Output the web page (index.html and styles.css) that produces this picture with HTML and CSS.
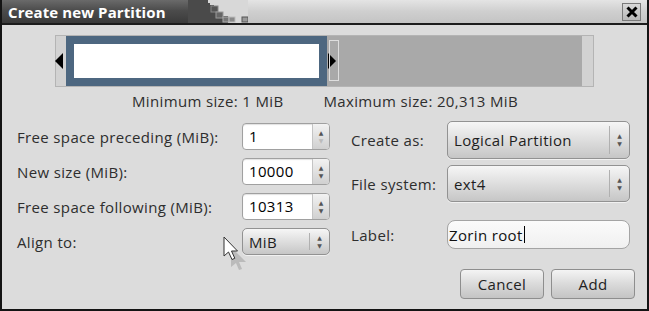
FILE: index.html
```html
<!DOCTYPE html>
<html>
<head>
<meta charset="utf-8">
<link rel="stylesheet" href="styles.css">
</head>
<body>
<div class="window">
  <div class="titlebar">
    <div class="title-dark"><span class="title-text">Create new Partition</span></div>
    <svg class="stairs" width="60" height="23" viewBox="0 0 60 23">
      <rect x="0" y="0" width="60" height="23" fill="#d8d8d8"/>
      <polygon points="0,0 20,0 20,3 22,3 22,5 26,5 26,8 30,8 30,12 35,12 35,16 40,16 40,23 0,23" fill="#4a4a4a"/>
      <rect x="23" y="6" width="7" height="6" fill="#555" stroke="#888" stroke-width="1"/>
      <rect x="28" y="12" width="7" height="6" fill="#666" stroke="#999" stroke-width="1"/>
      <rect x="35" y="17" width="6" height="5" fill="#777" stroke="#aaa" stroke-width="1"/>
      <rect x="41" y="17" width="6" height="5" fill="#888" stroke="#bbb" stroke-width="1"/>
      <rect x="54" y="17" width="6" height="5" fill="#999" stroke="#555" stroke-width="1"/>
    </svg>
    <div class="title-light">
      <div class="close-btn">
        <svg width="12" height="12" viewBox="0 0 12 12"><path d="M1.5 1.5 L10.5 10.5 M10.5 1.5 L1.5 10.5" stroke="#000" stroke-width="3"/></svg>
      </div>
    </div>
  </div>
  <div class="content">
    <div class="partbar">
      <div class="strip-light"></div>
      <div class="part-sel"><div class="part-inner"></div></div>
      <div class="part-free"></div>
      <div class="strip-light right"></div>
      <div class="arrow-left"></div>
      <div class="arrow-right"></div>
      <div class="free-handle"></div>
    </div>
    <div class="sizes">
      <span>Minimum size: 1 MiB</span>
      <span>Maximum size: 20,313 MiB</span>
    </div>
    <div class="form">
      <div class="col-left">
        <div class="row"><span class="lbl">Free space preceding (MiB):</span>
          <div class="spin"><span class="spin-val">1</span><div class="spin-btn"><span class="up">▲</span><span class="down dim">▼</span></div></div></div>
        <div class="row"><span class="lbl">New size (MiB):</span>
          <div class="spin"><span class="spin-val">10000</span><div class="spin-btn"><span class="up">▲</span><span class="down">▼</span></div></div></div>
        <div class="row"><span class="lbl">Free space following (MiB):</span>
          <div class="spin"><span class="spin-val">10313</span><div class="spin-btn"><span class="up">▲</span><span class="down">▼</span></div></div></div>
        <div class="row"><span class="lbl">Align to:</span>
          <div class="combo small"><span class="combo-val">MiB</span><div class="combo-arr"><span>▲</span><span>▼</span></div></div></div>
      </div>
      <div class="col-right">
        <div class="rrow tall"><span class="rlbl">Create as:</span>
          <div class="combo big"><span class="combo-val">Logical Partition</span><div class="combo-arr"><span>▲</span><span>▼</span></div></div></div>
        <div class="rrow tall2"><span class="rlbl">File system:</span>
          <div class="combo big"><span class="combo-val">ext4</span><div class="combo-arr"><span>▲</span><span>▼</span></div></div></div>
        <div class="rrow entryrow"><span class="rlbl">Label:</span>
          <div class="entry"><span>Zorin root</span><span class="caret"></span></div></div>
        <div class="buttons">
          <div class="btn">Cancel</div>
          <div class="btn">Add</div>
        </div>
      </div>
    </div>
  </div>
  <svg class="pointer" width="28" height="34" viewBox="0 0 28 34">
    <path d="M6 8 L21 23 L14 23 L17 30 L14 31 L11 24 L6 28 Z" fill="#999" opacity="0.5" transform="translate(3,3)"/>
    <path d="M2 1 L2 20 L6.5 16 L10 23.5 L12.8 22.3 L9.5 15 L15.5 15 Z" fill="#fff" stroke="#333" stroke-width="1" stroke-linejoin="round"/>
  </svg>
</div>
</body>
</html>
```
FILE: styles.css
```css
* { box-sizing: border-box; }
html, body { margin: 0; padding: 0; }
body { width: 649px; height: 311px; overflow: hidden; font-family: "Open Sans", "DejaVu Sans", sans-serif; font-size: 15px; letter-spacing: 0.35px; color: #2e2e2e; }

.window {
  position: relative;
  width: 649px; height: 311px;
  background: #dcdcdc;
  border: 2px solid #141414;
  border-top: 0;
  display: flex; flex-direction: column;
}

.titlebar {
  height: 25px;
  display: flex;
  border-bottom: 2px solid #1c1c1c;
  flex: none;
}
.title-dark {
  width: 186px;
  background: linear-gradient(#6a6a6a, #4c4c4c 45%, #3a3a3a);
  display: flex; align-items: center;
  padding-left: 6px;
}
.title-text { color: #fff; font-weight: bold; font-size: 15px; letter-spacing: 0.1px; }
.stairs { flex: none; display: block; }
.title-light {
  flex: 1;
  background: linear-gradient(#e4e4e4, #cfcfcf 50%, #c4c4c4);
  display: flex; justify-content: flex-end; align-items: center;
  padding-right: 6px;
}
.close-btn {
  width: 19px; height: 18px;
  background: linear-gradient(#d8d8d8, #b8b8b8);
  border: 1px solid #7a7a7a;
  display: flex; align-items: center; justify-content: center;
  margin-top: 1px;
}

.content { flex: 1; display: flex; flex-direction: column; }

.partbar {
  position: relative;
  margin: 10px 0 0 53px;
  width: 539px; height: 52px;
  border: 1px solid #b4b4b4;
  display: flex;
}
.strip-light { width: 10px; background: #d2d2d2; }
.strip-light.right { width: 11px; }
.part-sel { width: 261px; border: 8px solid #4d6780; background: #fff; }
.part-free { flex: 1; background: #a9a9a9; }
.arrow-left {
  position: absolute; left: -1px; top: 17px;
  width: 0; height: 0;
  border-top: 8px solid transparent; border-bottom: 8px solid transparent;
  border-right: 8px solid #000;
}
.arrow-right {
  position: absolute; left: 272px; top: 17px;
  width: 0; height: 0;
  border-top: 8px solid transparent; border-bottom: 8px solid transparent;
  border-left: 8px solid #000;
}
.free-handle {
  position: absolute; left: 273px; top: 4px;
  width: 10px; height: 41px;
  border: 1px solid #dedede;
}

.sizes {
  height: 19px; margin-top: 5px;
  display: flex; gap: 40px;
  padding-left: 130px;
  line-height: 19px;
}

.form { display: flex; margin-top: 10px; }
.col-left { width: 330px; padding-left: 15px; padding-top: 2px; display: flex; flex-direction: column; gap: 8px; }
.row { height: 27px; display: flex; align-items: center; }
.lbl { width: 225px; }

.spin {
  width: 88px; height: 27px;
  border: 1px solid #a0a0a0; border-radius: 4px;
  background: #fff;
  display: flex; overflow: hidden;
  box-shadow: inset 0 1px 1px rgba(0,0,0,0.12);
}
.spin-val { flex: 1; padding-left: 6px; line-height: 25px; color: #000; font-size: 15px; }
.spin-btn {
  width: 17px;
  background: linear-gradient(#f2f2f2, #d0d0d0);
  border-left: 1px solid #c4c4c4;
  display: flex; flex-direction: column; align-items: center; justify-content: center;
  font-size: 6px; line-height: 8px; color: #555; letter-spacing: 0;
}
.spin-btn .dim { color: #bbb; }

.combo {
  border: 1px solid #929292; border-radius: 5px;
  background: linear-gradient(#f6f6f6, #dedede 50%, #c6c6c6);
  display: flex; align-items: center;
  box-shadow: 0 1px 0 rgba(255,255,255,0.6);
}
.combo.small { width: 88px; height: 27px; }
.combo.big { width: 183px; height: 38px; }
.combo-val { flex: 1; padding-left: 6px; color: #1e1e1e; font-size: 15px; }
.combo-arr {
  width: 20px; align-self: stretch;
  margin: 4px 0;
  border-left: 1px solid #b0b0b0;
  display: flex; flex-direction: column; align-items: center; justify-content: center;
  font-size: 6px; line-height: 8px; color: #555; letter-spacing: 0;
}

.col-right { width: 300px; margin-left: 21px; display: flex; flex-direction: column; }
.rrow { display: flex; align-items: center; }
.rlbl { width: 96px; }
.rrow.tall2 { margin-top: 6px; }
.rrow.tall2 .combo.big { height: 37px; }
.entryrow { margin-top: 18px; }
.entry {
  width: 183px; height: 29px;
  border: 1px solid #a4a4a4; border-radius: 8px;
  background: linear-gradient(#fbfbfb, #f0f0f0);
  display: flex; align-items: center;
  padding-left: 1px; font-size: 15px; color: #111;
}
.caret { width: 1px; height: 17px; background: #000; margin-left: 1px; }

.buttons { display: flex; justify-content: flex-end; gap: 7px; margin-top: 20px; padding-right: 12px; }
.btn {
  width: 84px; height: 30px;
  border: 1px solid #8e8e8e; border-radius: 4px;
  background: linear-gradient(#f4f4f4, #dadada 50%, #c4c4c4);
  display: flex; align-items: center; justify-content: center;
  font-size: 15px; color: #222;
}

.pointer { position: absolute; left: 220px; top: 236px; }
```
